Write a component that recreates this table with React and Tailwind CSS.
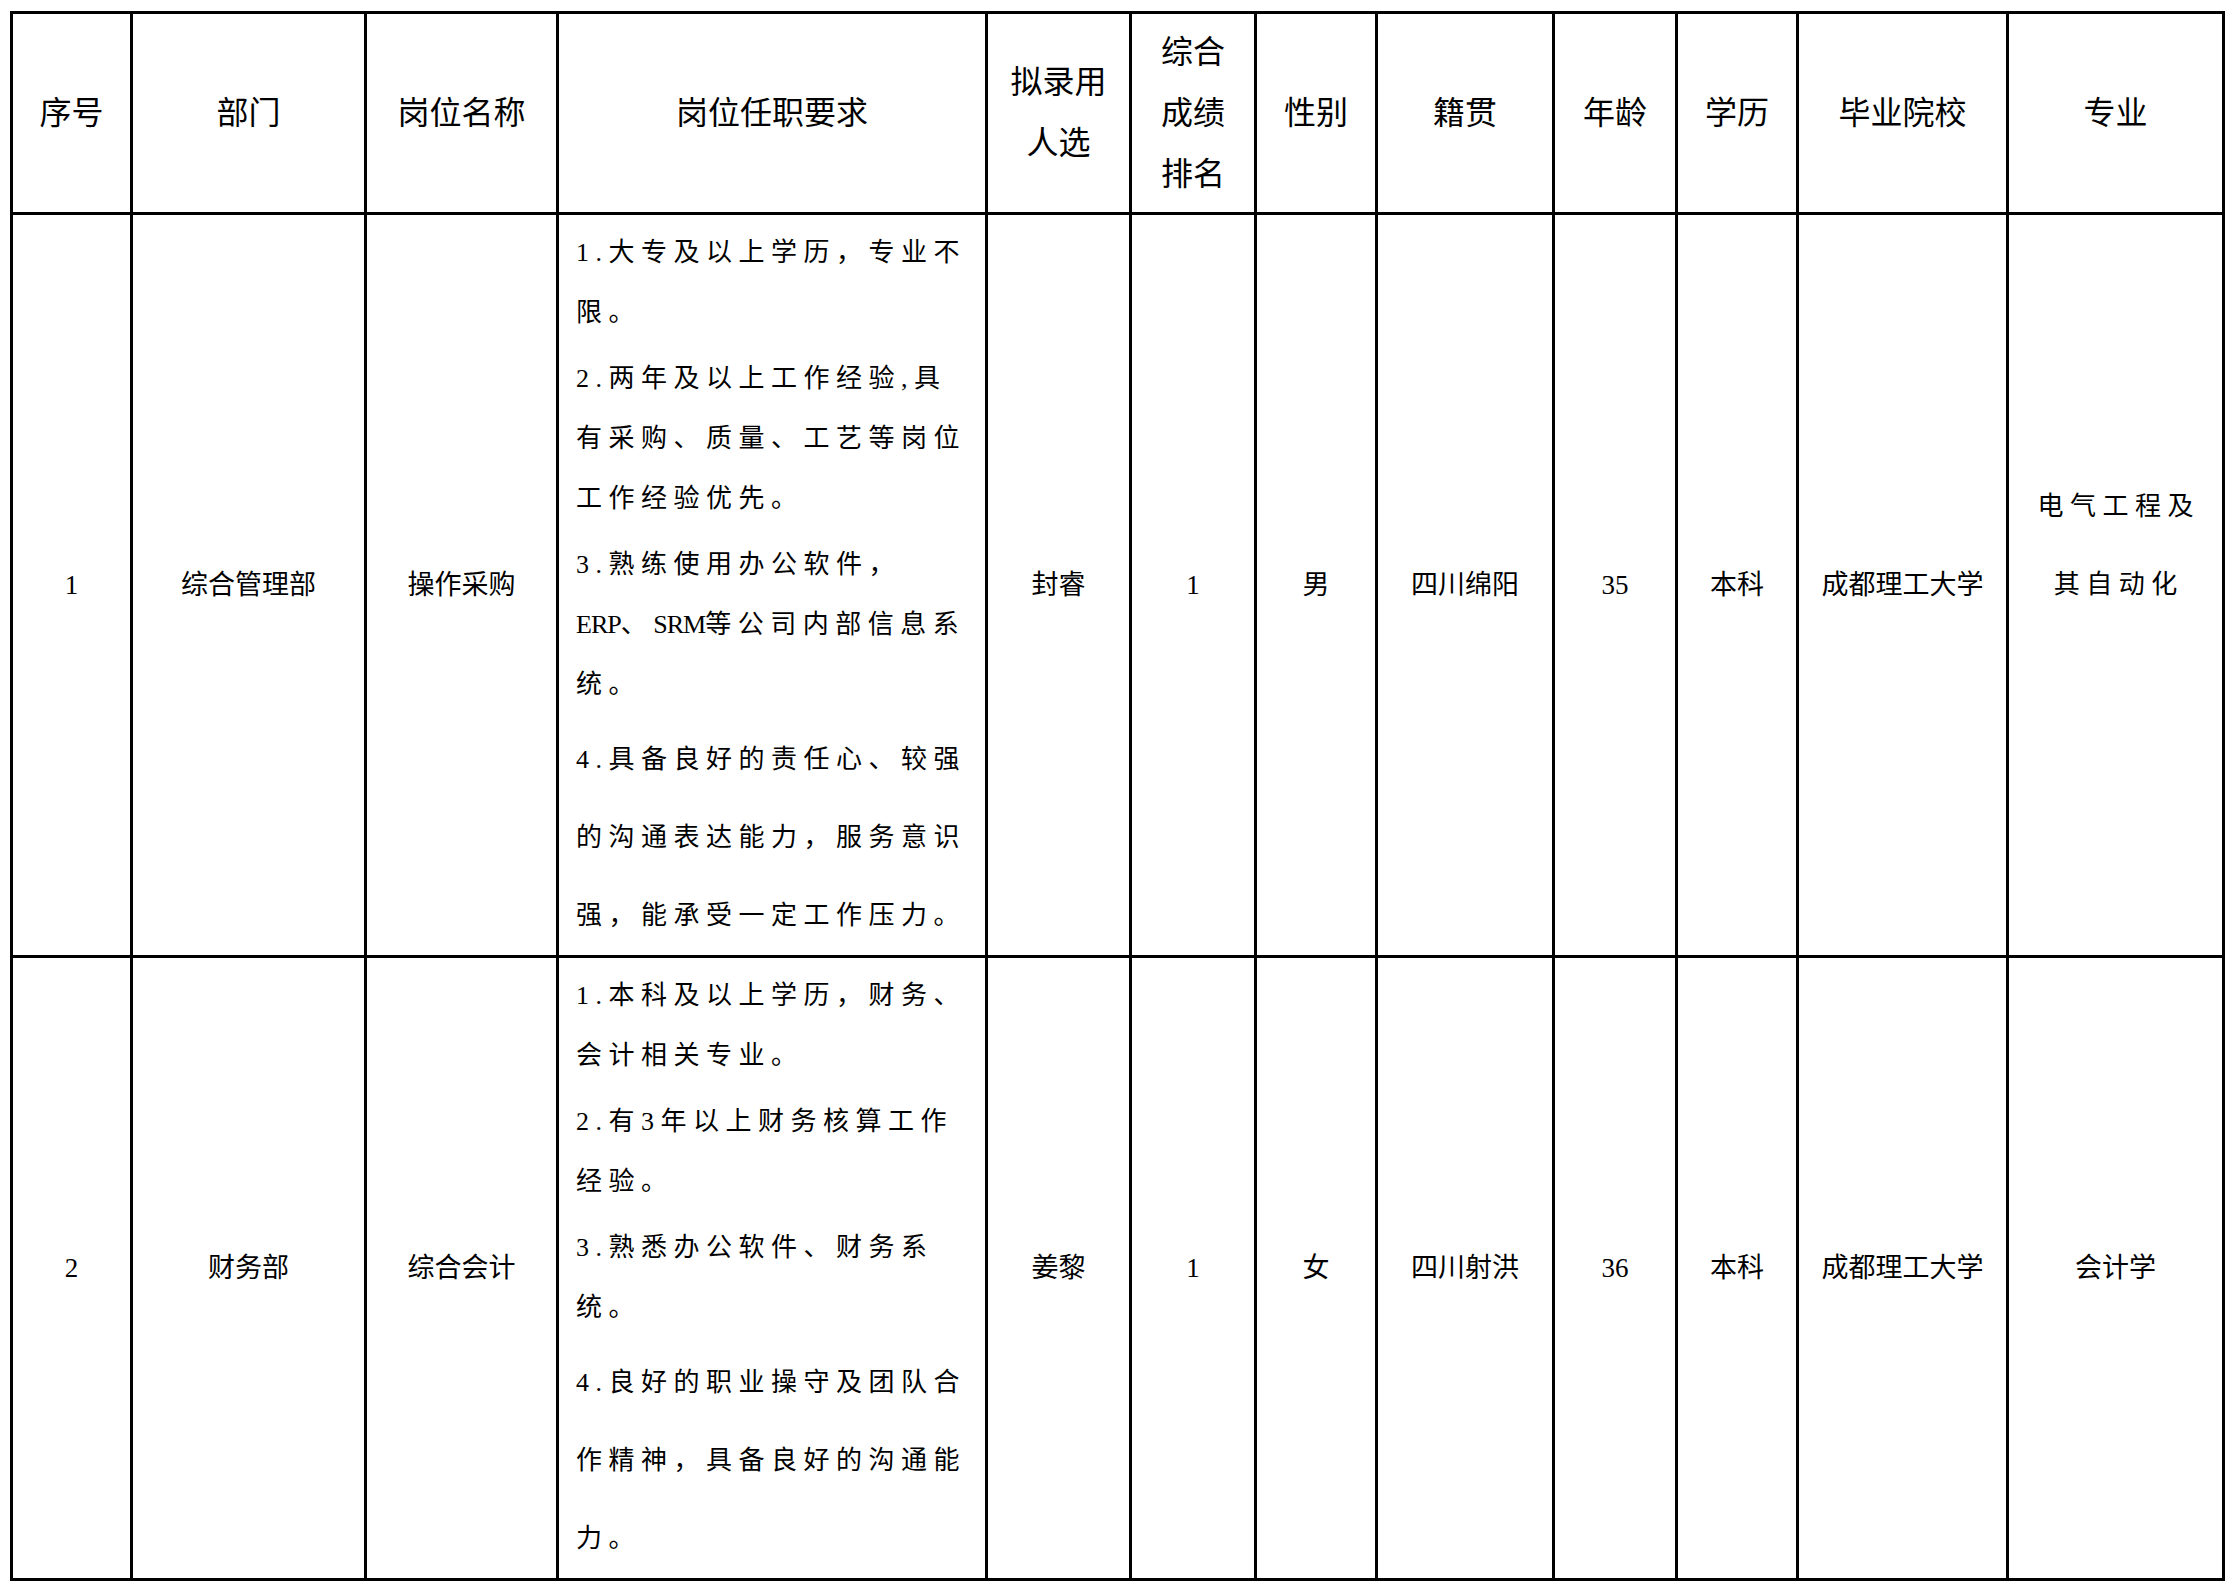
import React from 'react';

const header = [
  ['序号'],
  ['部门'],
  ['岗位名称'],
  ['岗位任职要求'],
  ['拟录用', '人选'],
  ['综合', '成绩', '排名'],
  ['性别'],
  ['籍贯'],
  ['年龄'],
  ['学历'],
  ['毕业院校'],
  ['专业'],
];

const latin = (t) => <span className="tracking-[-1px]">{t}</span>;

const req1 = [
  { tall: false, lines: ['1.大专及以上学历，专业不', '限。'] },
  { tall: false, lines: ['2.两年及以上工作经验,具', '有采购、质量、工艺等岗位', '工作经验优先。'] },
  {
    tall: false,
    lines: [
      '3.熟练使用办公软件，',
      <>{latin('ERP')}、{latin('SRM')}等公司内部信息系</>,
      '统。',
    ],
  },
  { tall: true, lines: ['4.具备良好的责任心、较强', '的沟通表达能力，服务意识', '强，能承受一定工作压力。'] },
];

const req2 = [
  { tall: false, lines: ['1.本科及以上学历，财务、', '会计相关专业。'] },
  { tall: false, lines: ['2.有3年以上财务核算工作', '经验。'] },
  { tall: false, lines: ['3.熟悉办公软件、财务系', '统。'] },
  { tall: true, lines: ['4.良好的职业操守及团队合', '作精神，具备良好的沟通能', '力。'] },
];

function Requirements({ paras }) {
  return (
    <div className="bg-white pt-[8px] pl-[17px] text-[26px] tracking-[6.5px]">
      {paras.map((p, i) => (
        <div key={i} className={i > 0 ? 'mt-[6px]' : ''}>
          {p.lines.map((line, j) => (
            <div
              key={j}
              className={`whitespace-nowrap ${p.tall ? 'leading-[78px]' : 'leading-[60px]'}`}
            >
              {line}
            </div>
          ))}
        </div>
      ))}
    </div>
  );
}

function Cell({ children }) {
  return (
    <div className="bg-white flex items-center justify-center text-center text-[27px] leading-[40px]">
      {children}
    </div>
  );
}

function Major() {
  return (
    <div className="bg-white flex items-center justify-center text-center">
      <div className="mb-[78px] pl-[6.5px] text-[26px] leading-[78px] tracking-[6.5px]">
        <div>电气工程及</div>
        <div>其自动化</div>
      </div>
    </div>
  );
}

export default function App() {
  const row1 = ['1', '综合管理部', '操作采购', null, '封睿', '1', '男', '四川绵阳', '35', '本科', '成都理工大学', null];
  const row2 = ['2', '财务部', '综合会计', null, '姜黎', '1', '女', '四川射洪', '36', '本科', '成都理工大学', '会计学'];

  return (
    <div className="min-h-[1590px] bg-white pt-[11px] pl-[10px] text-black font-['Liberation_Serif','Noto_Sans_CJK_SC',serif]">
      <div className="grid w-fit grid-cols-[117px_231px_189px_426px_141px_122px_118px_174px_120px_118px_207px_213px] grid-rows-[198px_740px_620px] gap-[3px] bg-black p-[3px]">
        {header.map((lines, i) => (
          <div key={i} className="bg-white flex items-center justify-center text-center text-[32px] leading-[61px]">
            <div>
              {lines.map((l) => (
                <div key={l}>{l}</div>
              ))}
            </div>
          </div>
        ))}

        {row1.map((v, i) => {
          if (i === 3) return <Requirements key={i} paras={req1} />;
          if (i === 11) return <Major key={i} />;
          return <Cell key={i}>{v}</Cell>;
        })}

        {row2.map((v, i) => {
          if (i === 3) return <Requirements key={i} paras={req2} />;
          return <Cell key={i}>{v}</Cell>;
        })}
      </div>
    </div>
  );
}
